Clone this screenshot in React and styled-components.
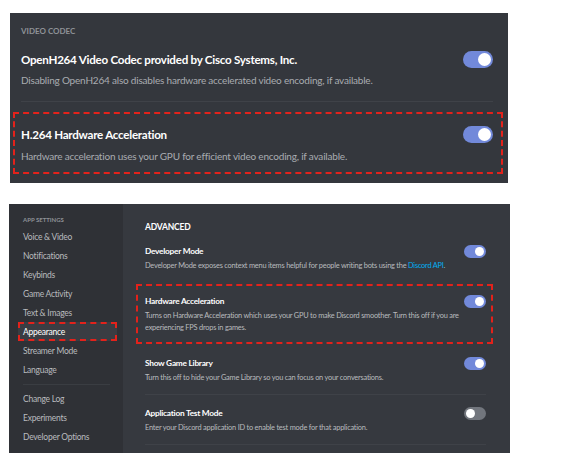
import styled, { createGlobalStyle } from "styled-components";

const Global = createGlobalStyle`
  body {
    margin: 0;
    background: #ffffff;
    font-family: "Lato", "Open Sans", sans-serif;
  }
`;

const Page = styled.div`
  width: 565px;
  height: 462px;
  display: flex;
  flex-direction: column;
`;

const CodecPanel = styled.section`
  margin: 13px 0 0 10px;
  width: 498px;
  height: 170px;
  box-sizing: border-box;
  background: #34373d;
  padding: 13px 5px 0 3px;
`;

const Header = styled.div`
  padding: 0 10px 0 8px;
  font-size: 8px;
  line-height: 10px;
  font-weight: 700;
  color: #8e9297;
  text-transform: uppercase;
`;

const BigRow = styled.div`
  padding: ${(p) => (p.marked ? "12px 8px 9px 6px" : "0 10px 0 8px")};
  margin-top: ${(p) => p.top || 0}px;
  border: ${(p) => (p.marked ? "2px dashed #e3221b" : "none")};
`;

const TitleLine = styled.div`
  display: flex;
  align-items: center;
  justify-content: space-between;
`;

const BigTitle = styled.div`
  font-size: 11.6px;
  letter-spacing: -0.25px;
  line-height: 16px;
  font-weight: 700;
  color: #ffffff;
`;

const BigDesc = styled.div`
  margin-top: ${(p) => p.gap}px;
  font-size: 10px;
  letter-spacing: -0.2px;
  line-height: 14px;
  color: #a9acb1;
`;

const Divider = styled.div`
  height: 1px;
  background: #3f4248;
  margin: ${(p) => p.m};
`;

const Track = styled.div`
  width: ${(p) => p.w}px;
  height: ${(p) => p.h}px;
  border-radius: ${(p) => p.h / 2}px;
  background: ${(p) => (p.on ? "#7289da" : "#72767d")};
  display: flex;
  align-items: center;
  justify-content: ${(p) => (p.on ? "flex-end" : "flex-start")};
  padding: 0 2px;
  box-sizing: border-box;
  flex-shrink: 0;
`;

const Knob = styled.div`
  width: ${(p) => p.s}px;
  height: ${(p) => p.s}px;
  border-radius: 50%;
  background: #ffffff;
`;

const Toggle = ({ on = true, w, h }) => (
  <Track on={on} w={w} h={h}>
    <Knob s={h - 4} />
  </Track>
);

const SettingsPanel = styled.section`
  margin: 21px 0 0 9px;
  width: 501px;
  height: 249px;
  display: flex;
  background: #36393f;
  overflow: hidden;
`;

const Sidebar = styled.nav`
  width: 114px;
  flex-shrink: 0;
  background: #2f3136;
  padding-top: 11px;
  box-sizing: border-box;
`;

const SideHeader = styled.div`
  padding-left: 14px;
  font-size: 6px;
  line-height: 10px;
  font-weight: 700;
  color: #8e9297;
  margin-bottom: 2px;
`;

const SideItem = styled.div`
  margin-left: 9px;
  width: 99px;
  height: 19px;
  box-sizing: border-box;
  padding-left: 3px;
  border: 2px dashed ${(p) => (p.active ? "#e3221b" : "transparent")};
  background: ${(p) => (p.active ? "#3a3d43" : "transparent")};
  display: flex;
  align-items: center;
  font-size: 8.5px;
  letter-spacing: -0.25px;
  color: ${(p) => (p.active ? "#ffffff" : "#b9bbbe")};
`;

const SideDivider = styled.div`
  margin: 5px 0 4px 14px;
  width: 87px;
  height: 1px;
  background: #3a3d42;
`;

const Main = styled.main`
  flex: 1;
  padding: 17px 17px 0 13px;
`;

const SectionTitle = styled.div`
  padding-left: 9px;
  font-size: 8.5px;
  letter-spacing: -0.2px;
  line-height: 12px;
  font-weight: 700;
  color: #ffffff;
  margin-bottom: 11px;
`;

const Row = styled.div`
  padding: ${(p) => (p.marked ? "8px 5px 8px 7px" : "0 7px 0 9px")};
  margin-top: ${(p) => p.top || 0}px;
  border: ${(p) => (p.marked ? "2px dashed #e3221b" : "none")};
`;

const Title = styled.div`
  font-size: 8.3px;
  letter-spacing: -0.25px;
  line-height: 14px;
  font-weight: 700;
  color: #ffffff;
`;

const Desc = styled.div`
  margin-top: 2px;
  font-size: 7.4px;
  letter-spacing: -0.22px;
  line-height: 12px;
  color: #b9bbbe;
  padding-right: 10px;
`;

const Link = styled.span`
  color: #00b0f4;
`;

const sideTop = ["Voice & Video", "Notifications", "Keybinds", "Game Activity", "Text & Images", "Appearance", "Streamer Mode", "Language"];
const sideBottom = ["Change Log", "Experiments", "Developer Options"];

export default function App() {
  return (
    <Page>
      <Global />
      <CodecPanel>
        <Header>Video Codec</Header>
        <BigRow top={15}>
          <TitleLine>
            <BigTitle>OpenH264 Video Codec provided by Cisco Systems, Inc.</BigTitle>
            <Toggle w={30} h={17} />
          </TitleLine>
          <BigDesc gap={5}>Disabling OpenH264 also disables hardware accelerated video encoding, if available.</BigDesc>
        </BigRow>
        <Divider m="14px 10px 0 8px" />
        <BigRow marked top={10}>
          <TitleLine>
            <BigTitle>H.264 Hardware Acceleration</BigTitle>
            <Toggle w={30} h={17} />
          </TitleLine>
          <BigDesc gap={6}>Hardware acceleration uses your GPU for efficient video encoding, if available.</BigDesc>
        </BigRow>
      </CodecPanel>

      <SettingsPanel>
        <Sidebar>
          <SideHeader>APP SETTINGS</SideHeader>
          {sideTop.map((s) => (
            <SideItem key={s} active={s === "Appearance"}>{s}</SideItem>
          ))}
          <SideDivider />
          {sideBottom.map((s) => (
            <SideItem key={s}>{s}</SideItem>
          ))}
        </Sidebar>
        <Main>
          <SectionTitle>ADVANCED</SectionTitle>
          <Row>
            <TitleLine>
              <Title>Developer Mode</Title>
              <Toggle w={22} h={13} />
            </TitleLine>
            <Desc>
              Developer Mode exposes context menu items helpful for people writing bots using the <Link>Discord API</Link>.
            </Desc>
          </Row>
          <Row marked top={12}>
            <TitleLine>
              <Title>Hardware Acceleration</Title>
              <Toggle w={22} h={13} />
            </TitleLine>
            <Desc>
              Turns on Hardware Acceleration which uses your GPU to make Discord smoother. Turn this off if you are experiencing FPS drops in games.
            </Desc>
          </Row>
          <Row top={12}>
            <TitleLine>
              <Title>Show Game Library</Title>
              <Toggle w={22} h={13} />
            </TitleLine>
            <Desc>Turn this off to hide your Game Library so you can focus on your conversations.</Desc>
          </Row>
          <Divider m="10px 7px 0 9px" />
          <Row top={11}>
            <TitleLine>
              <Title>Application Test Mode</Title>
              <Toggle on={false} w={22} h={13} />
            </TitleLine>
            <Desc>Enter your Discord application ID to enable test mode for that application.</Desc>
          </Row>
          <Divider m="10px 7px 0 9px" />
        </Main>
      </SettingsPanel>
    </Page>
  );
}
